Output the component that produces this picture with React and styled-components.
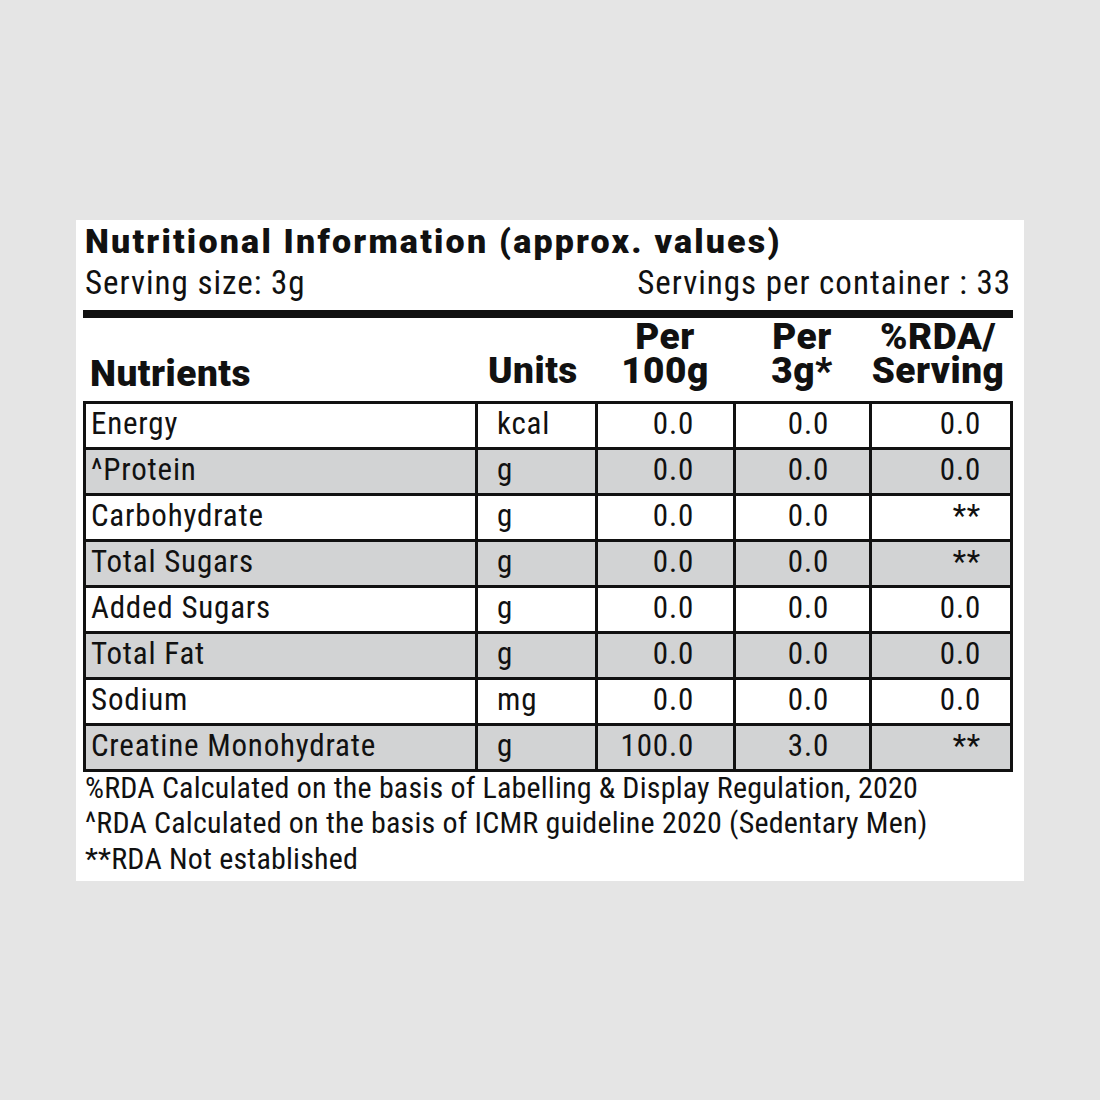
import React from "react";
import styled, { createGlobalStyle } from "styled-components";

const Global = createGlobalStyle`
  html, body { margin: 0; padding: 0; background: #e5e5e5; }
  body { font-family: Roboto, "Liberation Sans", sans-serif; color: #111; }
`;

const COND = `"Roboto Condensed", Roboto, "Liberation Sans Narrow", sans-serif`;

const Page = styled.div`
  width: 1100px;
  height: 1100px;
  display: flex;
  align-items: center;
  justify-content: center;
`;

const Card = styled.div`
  box-sizing: border-box;
  width: 948px;
  height: 661px;
  background: #fff;
  padding: 0 11px 0 7px;
  display: flex;
  flex-direction: column;
  & > * { flex: none; }
`;

const Title = styled.h1`
  margin: 0;
  padding-left: 2px;
  font-family: Roboto, sans-serif;
  font-weight: 900;
  font-size: 34px;
  line-height: 42px;
  height: 42px;
  letter-spacing: 2.2px;
  white-space: nowrap;
`;

const ServingRow = styled.div`
  display: flex;
  justify-content: space-between;
  align-items: flex-start;
  padding: 0 2px 0 2px;
  font-family: ${COND};
  font-size: 33px;
  letter-spacing: 1px;
  line-height: 42px;
  height: 48px;
  box-sizing: border-box;
  white-space: nowrap;
`;

const Rule = styled.div`
  height: 8px;
  background: #111;
`;

const COLS = "393px 120px 138px 136px 143px";

const HeadRow = styled.div`
  display: grid;
  grid-template-columns: ${COLS};
  align-items: end;
  height: 83px;
  box-sizing: border-box;
  padding-bottom: 13px;
  font-family: Roboto, sans-serif;
  font-weight: 900;
  font-size: 37px;
  letter-spacing: 0.5px;
  line-height: 34px;
`;

const HeadCell = styled.div`
  text-align: ${(p) => p.$align || "center"};
  padding-left: ${(p) => p.$pl || 0}px;
  padding-right: ${(p) => p.$pr || 0}px;
  margin-bottom: ${(p) => p.$mb || 0}px;
  white-space: nowrap;
`;

const Table = styled.table`
  border-collapse: separate;
  border-spacing: 0;
  table-layout: fixed;
  width: 930px;
  box-sizing: border-box;
  border-top: 3px solid #111;
  border-left: 3px solid #111;
  font-family: ${COND};
  font-size: 31px;
  letter-spacing: 0.8px;
`;

const Row = styled.tr`
  background: ${(p) => (p.$shade ? "#d2d3d4" : "#fff")};
`;

const Cell = styled.td`
  border-right: 3px solid #111;
  border-bottom: 3px solid #111;
  box-sizing: border-box;
  height: 46px;
  padding: 0 ${(p) => p.$pr || 0}px 3px ${(p) => p.$pl || 0}px;
  text-align: ${(p) => p.$align || "left"};
  vertical-align: middle;
  line-height: 38px;
  white-space: nowrap;
`;

const Notes = styled.div`
  margin-top: -2px;
  padding: 0 0 0 2px;
  font-family: ${COND};
  font-size: 30px;
  letter-spacing: 0.2px;
  line-height: 35.5px;
  white-space: nowrap;
`;

const rows = [
  ["Energy", "kcal", "0.0", "0.0", "0.0"],
  ["^Protein", "g", "0.0", "0.0", "0.0"],
  ["Carbohydrate", "g", "0.0", "0.0", "**"],
  ["Total Sugars", "g", "0.0", "0.0", "**"],
  ["Added Sugars", "g", "0.0", "0.0", "0.0"],
  ["Total Fat", "g", "0.0", "0.0", "0.0"],
  ["Sodium", "mg", "0.0", "0.0", "0.0"],
  ["Creatine Monohydrate", "g", "100.0", "3.0", "**"],
];

export default function App() {
  return (
    <>
      <Global />
      <Page>
        <Card>
          <Title>Nutritional Information (approx. values)</Title>
          <ServingRow>
            <span>Serving size: 3g</span>
            <span>Servings per container : 33</span>
          </ServingRow>
          <Rule />
          <HeadRow>
            <HeadCell $align="left" $pl={7} $mb={-3}>Nutrients</HeadCell>
            <HeadCell $align="left" $pl={12}>Units</HeadCell>
            <HeadCell>Per<br />100g</HeadCell>
            <HeadCell>Per<br />3g*</HeadCell>
            <HeadCell $pr={7}>%RDA/<br />Serving</HeadCell>
          </HeadRow>
          <Table>
            <colgroup>
              <col style={{ width: 392 }} />
              <col style={{ width: 120 }} />
              <col style={{ width: 138 }} />
              <col style={{ width: 136 }} />
              <col style={{ width: 141 }} />
            </colgroup>
            <tbody>
              {rows.map((r, i) => (
                <Row key={r[0]} $shade={i % 2 === 1}>
                  <Cell $pl={5}>{r[0]}</Cell>
                  <Cell $pl={19}>{r[1]}</Cell>
                  <Cell $align="right" $pr={39}>{r[2]}</Cell>
                  <Cell $align="right" $pr={40}>{r[3]}</Cell>
                  <Cell $align="right" $pr={29}>{r[4]}</Cell>
                </Row>
              ))}
            </tbody>
          </Table>
          <Notes>
            <div>%RDA Calculated on the basis of Labelling &amp; Display Regulation, 2020</div>
            <div>^RDA Calculated on the basis of ICMR guideline 2020 (Sedentary Men)</div>
            <div>**RDA Not established</div>
          </Notes>
        </Card>
      </Page>
    </>
  );
}
